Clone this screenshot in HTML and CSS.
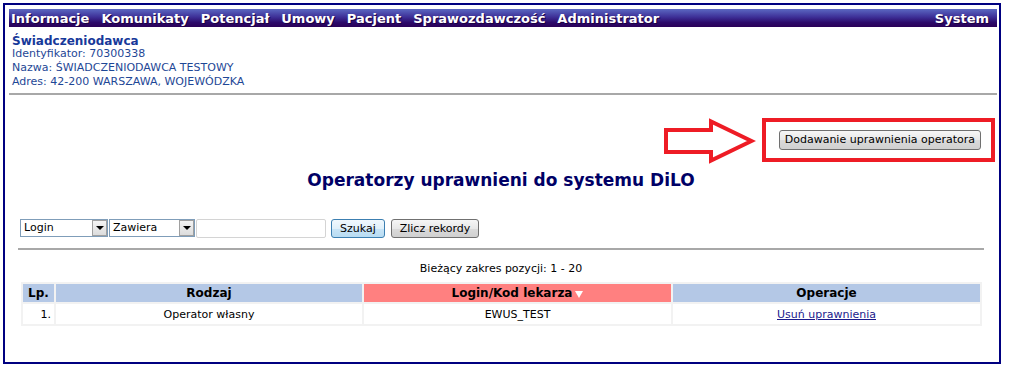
FILE: index.html
```html
<!DOCTYPE html>
<html lang="pl">
<head>
    <meta charset="UTF-8">
    <title>DiLO - Operatorzy</title>
    <link rel="stylesheet" href="styles.css">
</head>
<body>
    <div class="frame">
        <div class="menu">
            <div class="menu-left">
                <a href="#">Informacje</a>
                <a href="#">Komunikaty</a>
                <a href="#">Potencjał</a>
                <a href="#">Umowy</a>
                <a href="#">Pacjent</a>
                <a href="#">Sprawozdawczość</a>
                <a href="#">Administrator</a>
            </div>
            <a href="#">System</a>
        </div>

        <div class="provider">
            <div class="provider-title">Świadczeniodawca</div>
            <div>Identyfikator: 70300338</div>
            <div>Nazwa: ŚWIADCZENIODAWCA TESTOWY</div>
            <div>Adres: 42-200 WARSZAWA, WOJEWÓDZKA</div>
        </div>

        <div class="content">
            <div class="toolbar">
                <svg class="arrow" width="92" height="47" viewBox="0 0 92 47">
                    <polygon points="2,12 47,12 47,3.5 87.5,23 47,42.5 47,34 2,34" fill="none" stroke="#ee1c25" stroke-width="4"/>
                </svg>
                <div class="highlight">
                    <button class="btn">Dodawanie uprawnienia operatora</button>
                </div>
            </div>

            <h1 class="page-title">Operatorzy uprawnieni do systemu DiLO</h1>

            <div class="filter">
                <span class="select select-field">
                    <span class="select-value">Login</span>
                    <span class="select-arrow"></span>
                </span>
                <span class="select select-mode">
                    <span class="select-value">Zawiera</span>
                    <span class="select-arrow"></span>
                </span>
                <input class="search-input" type="text">
                <button class="btn btn-focus">Szukaj</button>
                <button class="btn">Zlicz rekordy</button>
            </div>

            <div class="divider"></div>

            <div class="range">Bieżący zakres pozycji: 1 - 20</div>

            <table class="list">
                <thead>
                    <tr>
                        <th class="col-lp">Lp.</th>
                        <th class="col-kind">Rodzaj</th>
                        <th class="col-login sorted">Login/Kod lekarza<span class="sort-arrow"></span></th>
                        <th class="col-ops">Operacje</th>
                    </tr>
                </thead>
                <tbody>
                    <tr>
                        <td class="num">1.</td>
                        <td>Operator własny</td>
                        <td>EWUS_TEST</td>
                        <td><a href="#">Usuń uprawnienia</a></td>
                    </tr>
                </tbody>
            </table>
        </div>
    </div>
</body>
</html>
```

FILE: styles.css
```css
:root {
    --frame: #000080;
    --header-blue: #b4c8e6;
    --sorted-red: #ff8080;
    --info-blue: #1e4796;
    --title-navy: #000066;
}

body {
    margin: 0;
    padding: 3px 0 0 3px;
    font-family: 'DejaVu Sans', Verdana, sans-serif;
    font-size: 11px;
    color: #000;
    background: #fff;
}

.frame {
    width: 988px;
    height: 349px;
    border: 2px solid var(--frame);
    padding: 4px 2px 4px 4px;
}

.menu {
    display: flex;
    justify-content: space-between;
    align-items: center;
    height: 18px;
    padding: 0 8px 0 2px;
    background: linear-gradient(to bottom, #5b68c2 0%, #3d2f96 45%, #2c0a6a 75%, #2a0058 100%);
}

.menu a {
    font-size: 13px;
    font-weight: bold;
    color: #fff;
    text-decoration: none;
    text-shadow: 1px 1px 0 #1a0040;
}

.menu-left {
    display: flex;
    gap: 12px;
}

.provider {
    margin-top: 8px;
    padding-left: 3px;
    color: var(--info-blue);
    line-height: 14px;
    padding-bottom: 4px;
    border-bottom: 2px solid #a8a8a8;
}

.provider-title {
    font-size: 12px;
    font-weight: bold;
    line-height: 12px;
    color: #17399a;
}

.content {
    padding: 0 13px 0 9px;
}

.toolbar {
    display: flex;
    justify-content: flex-end;
    align-items: center;
    margin: 19px -11px 0 0;
}

.arrow {
    display: block;
    margin-right: 6px;
    margin-top: 4px;
}

.highlight {
    border: 4px solid #ee1c25;
    padding: 8px 10px 8px 13px;
}

.btn {
    font-family: 'DejaVu Sans', Verdana, sans-serif;
    font-size: 11px;
    height: 20px;
    padding: 0 5px;
    border: 1px solid #707070;
    border-radius: 3px;
    background: linear-gradient(to bottom, #f6f6f6 0%, #e8e8e8 50%, #dadada 52%, #d0d0d0 100%);
    color: #000;
}

.btn-focus {
    border-color: #3c7fb1;
    background: linear-gradient(to bottom, #f0f8fd 0%, #e0f0fa 50%, #c8e4f6 52%, #b8dcf2 100%);
}

.page-title {
    margin: 5px 0 0;
    text-align: center;
    font-size: 17px;
    font-weight: bold;
    color: var(--title-navy);
    line-height: 20px;
}

.filter {
    display: flex;
    align-items: center;
    margin-top: 28px;
    padding-left: 2px;
    height: 20px;
}

.select {
    position: relative;
    display: inline-block;
    height: 18px;
    box-sizing: border-box;
    border: 1px solid #7f9db9;
    background: #fff;
    font-size: 11px;
    line-height: 16px;
}

.select-field {
    width: 88px;
}

.select-mode {
    width: 86px;
    margin-left: 1px;
}

.select-value {
    padding-left: 3px;
}

.select-arrow {
    position: absolute;
    top: 0;
    right: 0;
    width: 15px;
    height: 16px;
    box-sizing: border-box;
    border: 1px solid #a0a0a0;
    background: linear-gradient(to bottom, #f4f4f4, #dcdcdc);
}

.select-arrow::after {
    content: '';
    position: absolute;
    left: 3px;
    top: 5px;
    border-left: 4px solid transparent;
    border-right: 4px solid transparent;
    border-top: 4px solid #000;
}

.search-input {
    width: 130px;
    height: 19px;
    box-sizing: border-box;
    margin: 0 5px 0 1px;
    border: 1px solid #d4d4d4;
    border-radius: 2px;
    font-size: 11px;
}

.filter .btn {
    height: 19px;
    padding: 0 8px;
    margin-right: 6px;
}

.divider {
    margin: 10px 0 0 0;
    border-top: 2px solid #a8a8a8;
}

.range {
    margin-top: 12px;
    text-align: center;
    line-height: 14px;
}

.list {
    margin: 6px 0 0 3px;
    width: 961px;
    border-spacing: 2px;
    background: #f2f2f2;
}

.list th {
    height: 18px;
    padding: 0;
    background: var(--header-blue);
    font-size: 12px;
    font-weight: bold;
}

.list th.sorted {
    background: var(--sorted-red);
}

.col-lp { width: 31px; }
.col-kind { width: 306px; }
.col-login { width: 307px; }

.sort-arrow {
    display: inline-block;
    margin-left: 3px;
    border-left: 4px solid transparent;
    border-right: 4px solid transparent;
    border-top: 7px solid #fff;
    vertical-align: -1px;
}

.list td {
    height: 20px;
    padding: 0;
    background: #fff;
    text-align: center;
}

.list td.num {
    text-align: right;
    padding-right: 3px;
}

.list a {
    color: #1a1a8c;
}
```
